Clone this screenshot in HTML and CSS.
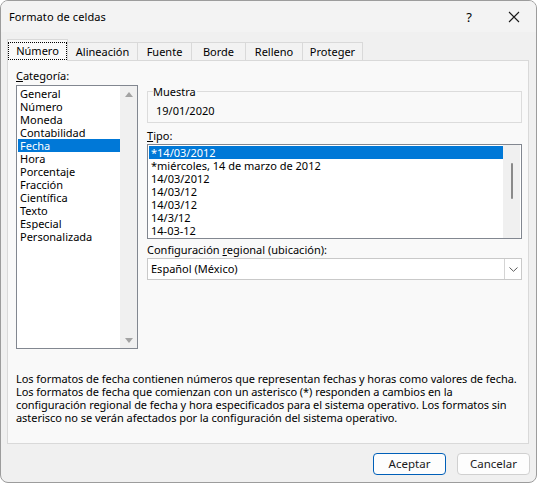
FILE: index.html
```html
<!DOCTYPE html>
<html lang="es">
<head>
<meta charset="utf-8">
<title>Formato de celdas</title>
<link rel="stylesheet" href="styles.css">
</head>
<body>
<div class="dialog">
  <div class="titlebar">
    <span class="title">Formato de celdas</span>
    <span class="help">?</span>
    <svg class="close" width="12" height="12" viewBox="0 0 12 12"><path d="M1 1 L11 11 M11 1 L1 11" stroke="#1a1a1a" stroke-width="1.1" fill="none"/></svg>
  </div>
  <div class="tabs">
    <div class="tab tab-numero active"><span class="focus">Número</span></div>
    <div class="tab tab-alin">Alineación</div>
    <div class="tab tab-fuente">Fuente</div>
    <div class="tab tab-borde">Borde</div>
    <div class="tab tab-relleno">Relleno</div>
    <div class="tab tab-proteger">Proteger</div>
  </div>
  <div class="panel">
    <div class="cols">
      <div class="leftcol">
        <div class="label"><u>C</u>ategoría:</div>
        <div class="listbox catlist">
          <ul class="items">
            <li>General</li>
            <li>Número</li>
            <li>Moneda</li>
            <li>Contabilidad</li>
            <li class="sel">Fecha</li>
            <li>Hora</li>
            <li>Porcentaje</li>
            <li>Fracción</li>
            <li>Científica</li>
            <li>Texto</li>
            <li>Especial</li>
            <li>Personalizada</li>
          </ul>
          <div class="vscroll arrows">
            <span class="tri up"></span>
            <span class="tri down"></span>
          </div>
        </div>
      </div>
      <div class="rightcol">
        <fieldset class="sample">
          <legend>Muestra</legend>
          <div class="sample-value">19/01/2020</div>
        </fieldset>
        <div class="label tipo-label"><u>T</u>ipo:</div>
        <div class="listbox typelist">
          <ul class="items">
            <li class="sel">*14/03/2012</li>
            <li>*miércoles, 14 de marzo de 2012</li>
            <li>14/03/2012</li>
            <li>14/03/12</li>
            <li>14/03/12</li>
            <li>14/3/12</li>
            <li>14-03-12</li>
          </ul>
          <div class="vscroll thin"><span class="thumb"></span></div>
        </div>
        <div class="label config-label">Configuración <u>r</u>egional (ubicación):</div>
        <div class="combo">
          <span class="combo-text">Español (México)</span>
          <span class="combo-btn"><svg width="9" height="5" viewBox="0 0 9 5"><path d="M0.5 0.5 L4.5 4.3 L8.5 0.5" stroke="#5a5a5a" stroke-width="1" fill="none"/></svg></span>
        </div>
      </div>
    </div>
    <p class="desc">Los formatos de fecha contienen números que representan fechas y horas como valores de fecha.<br>Los formatos de fecha que comienzan con un asterisco (*) responden a cambios en la<br>configuración regional de fecha y hora especificados para el sistema operativo. Los formatos sin<br>asterisco no se verán afectados por la configuración del sistema operativo.</p>
  </div>
  <div class="footer">
    <button class="btn primary">Aceptar</button>
    <button class="btn">Cancelar</button>
  </div>
</div>
</body>
</html>
```
FILE: styles.css
```css
* { box-sizing: border-box; }
html, body { margin: 0; padding: 0; }
body {
  width: 538px;
  height: 484px;
  background: #ffffff;
  font-family: "Noto Sans", "Open Sans", sans-serif;
  font-size: 11px;
  color: #000;
  overflow: hidden;
}
.dialog {
  width: 537px;
  height: 483px;
  border: 1px solid #9c9c9c;
  border-radius: 8px;
  background: #f0f0f0;
  display: flex;
  flex-direction: column;
  overflow: hidden;
}
.titlebar {
  height: 31px;
  flex: none;
  display: flex;
  align-items: center;
  background: #f3f3f3;
  padding-left: 8px;
  font-size: 11px;
}
.title { flex: 1; letter-spacing: 0.1px; }
.help {
  font-size: 13px;
  width: 12px;
  margin-right: 33px;
  text-align: center;
}
.close { margin-right: 16px; }

.tabs {
  height: 21px;
  margin-top: 7px;
  padding-left: 6px;
  display: flex;
  align-items: flex-end;
  flex: none;
}
.tab {
  height: 18px;
  border: 1px solid #d9d9d9;
  border-bottom: none;
  background: #f2f2f2;
  display: flex;
  align-items: center;
  justify-content: center;
  margin-left: -1px;
  line-height: 13px;
}
.tab.active {
  height: 22px;
  margin-bottom: -1px;
  margin-left: 0;
  background: #f9f9f9;
  position: relative;
  z-index: 1;
}
.focus {
  outline: 1px dotted #000;
  padding: 1px 7px 2px 7px;
}
.tab-numero { width: 61px; }
.tab-alin { width: 71px; }
.tab-fuente { width: 55px; }
.tab-borde { width: 55px; }
.tab-relleno { width: 58px; }
.tab-proteger { width: 61px; }

.panel {
  height: 384px;
  margin: 0 7px 0 6px;
  border: 1px solid #d9d9d9;
  background: #f9f9f9;
  padding: 8px 8px 19px 8px;
  display: flex;
  flex-direction: column;
  flex: none;
}
.cols {
  display: grid;
  grid-template-columns: 122px 375px;
  column-gap: 9px;
}
.label { line-height: 13px; height: 13px; white-space: nowrap; }
u { text-decoration: underline; text-underline-offset: 1px; }

.listbox {
  border: 1px solid #828790;
  background: #fff;
  display: flex;
  padding: 1px;
}
.items {
  list-style: none;
  margin: 0;
  padding: 0;
  flex: 1;
}
.items li {
  height: 13px;
  line-height: 13px;
  padding-left: 2px;
  white-space: nowrap;
  overflow: hidden;
}
.items li.sel {
  background: #0078d7;
  color: #fff;
}
.catlist {
  margin-top: 3px;
  height: 264px;
  padding: 0 0 0 1px;
}
.catlist .items { margin-top: 1px; }
.vscroll {
  width: 17px;
  background: #f0f0f0;
  display: flex;
  flex-direction: column;
  align-items: center;
}
.typelist .vscroll { margin: -1px 0; }
.arrows { justify-content: space-between; padding: 6px 0 5px 0; }
.tri {
  width: 0;
  height: 0;
  border-left: 4.5px solid transparent;
  border-right: 4.5px solid transparent;
}
.tri.up { border-bottom: 5px solid #a3a3a3; }
.tri.down { border-top: 5px solid #a3a3a3; }

.sample {
  margin: 16px 0 0 0;
  padding: 0 5px 4px 5px;
  border: 1px solid #dcdcdc;
  height: 38px;
}
.sample legend {
  padding: 0 1px 0 0;
  line-height: 13px;
}
.sample-value {
  margin-top: 6px;
  margin-left: 3px;
  line-height: 13px;
}
.tipo-label { margin-top: 6px; }
.typelist {
  margin-top: 2px;
  height: 95px;
}
.thin { margin-left: 1px; }
.thumb {
  width: 2px;
  height: 36px;
  margin-top: 18px;
  margin-left: 1px;
  background: #8a8a8a;
  border-radius: 1px;
}
.config-label { margin-top: 4px; }
.combo {
  margin-top: 2px;
  height: 22px;
  border: 1px solid #c9c9c9;
  background: #fff;
  display: flex;
  align-items: stretch;
}
.combo-text {
  flex: 1;
  padding-left: 3px;
  line-height: 20px;
}
.combo-btn {
  width: 17px;
  border-left: 1px solid #d4d4d4;
  display: flex;
  align-items: center;
  justify-content: center;
}
.desc {
  margin: auto 0 0 0;
  line-height: 13px;
  white-space: nowrap;
  letter-spacing: -0.05px;
}

.footer {
  display: flex;
  justify-content: flex-end;
  gap: 11px;
  padding: 9px 6px 0 0;
}
.btn {
  width: 73px;
  height: 22px;
  border: 1px solid #d0d0d0;
  border-radius: 4px;
  background: #fdfdfd;
  font-family: "Noto Sans", "Open Sans", sans-serif;
  font-size: 11.5px;
  color: #1a1a1a;
  padding: 0;
  line-height: 18px;
}
.btn.primary {
  border-color: #005fb8;
}
```
